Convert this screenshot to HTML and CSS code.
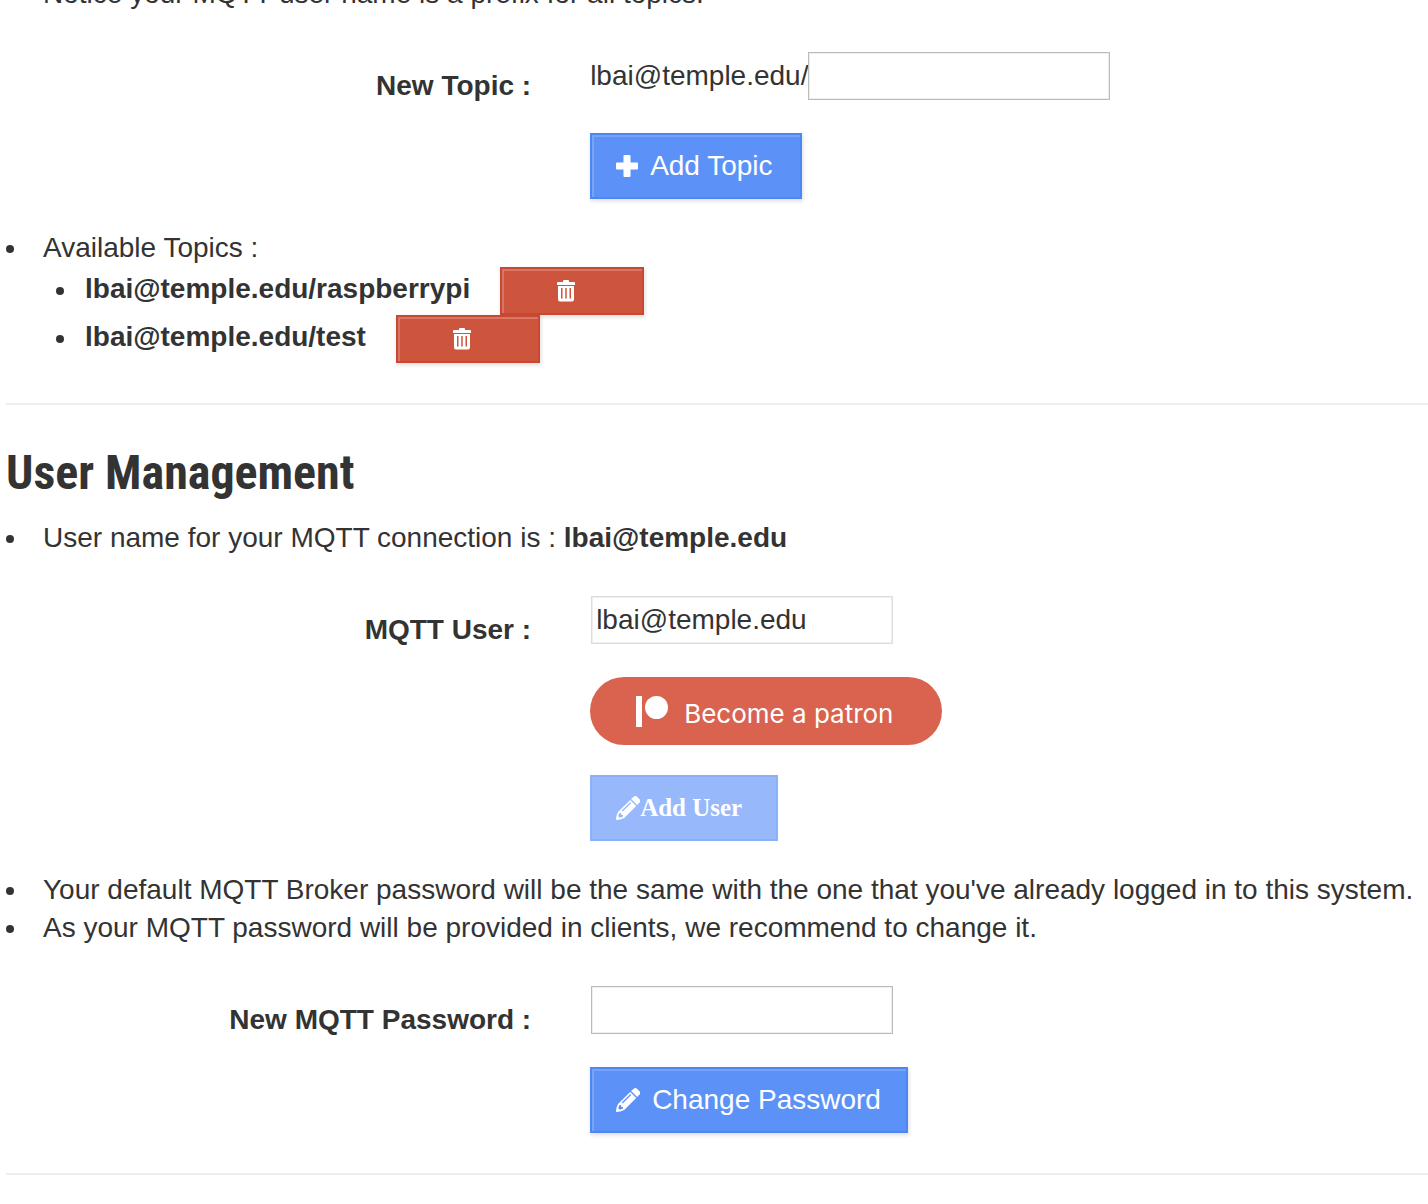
FILE: index.html
```html
<!DOCTYPE html>
<html lang="en">
<head>
<meta charset="utf-8">
<meta name="viewport" content="width=device-width, initial-scale=1">
<title>MQTT Broker</title>
<link rel="stylesheet" href="styles.css">
</head>
<body>
<svg class="sprite" aria-hidden="true">
  <symbol id="pencil" viewBox="0 0 24 24">
    <path fill-rule="evenodd" d="M17.500 1a2.600 2.600 0 0 1 3.700 0L23.300 3.100a2.600 2.600 0 0 1 0 3.700l-2.200 2.200-6-6zM14.200 3.900l6 6L8.200 22Q4.500 24 0 24q0-4.500 2-8zM3.600 17l-1.500 3 1.700 1.800 3.200-1.300v-1.500H5.200V17zM5.800 14.600l.9.9 8.500-8.500-.9-.9z"/>
  </symbol>
  <symbol id="trash" viewBox="0 0 18 22">
    <path fill-rule="evenodd" d="M6 1q0-1 1-1h4q1 0 1 1v1h5q1 0 1 1v2H0V3q0-1 1-1h5zM1 6h16v13.500a2 2 0 0 1-2 2H3a2 2 0 0 1-2-2zM4 8v10.500h1.500V8zM8.250 8v10.500h1.500V8zM12.500 8v10.500H14V8z"/>
  </symbol>
</svg>
<main class="page">
  <section>
    <ul class="list">
      <li><p>Notice your MQTT user name is a prefix for all topics.</p></li>
    </ul>
    <form class="form">
      <label for="topic">New Topic :</label>
      <div class="fields">
        <div class="prefixed"><span>lbai@temple.edu/</span><input class="text" id="topic" type="text"></div>
        <button class="btn btn-add" type="button">
          <svg class="plus" viewBox="0 0 22 22" aria-hidden="true"><path d="M8.500 0h5a1 1 0 0 1 1 1v6.500H21a1 1 0 0 1 1 1v5a1 1 0 0 1-1 1h-6.500V21a1 1 0 0 1-1 1h-5a1 1 0 0 1-1-1v-6.500H1a1 1 0 0 1-1-1v-5a1 1 0 0 1 1-1h6.500V1a1 1 0 0 1 1-1z"/></svg>
          Add Topic
        </button>
      </div>
    </form>
    <ul class="list">
      <li>
        <div>
          <p>Available Topics :</p>
          <ul class="topics">
            <li><strong>lbai@temple.edu/raspberrypi</strong><button class="btn-delete" type="button" aria-label="Delete lbai@temple.edu/raspberrypi"><svg class="trash" aria-hidden="true"><use href="#trash"/></svg></button></li>
            <li><strong>lbai@temple.edu/test</strong><button class="btn-delete" type="button" aria-label="Delete lbai@temple.edu/test"><svg class="trash" aria-hidden="true"><use href="#trash"/></svg></button></li>
          </ul>
        </div>
      </li>
    </ul>
  </section>
  <hr>
  <section>
    <h2>User Management</h2>
    <ul class="list">
      <li><p>User name for your MQTT connection is : <strong>lbai@temple.edu</strong></p></li>
    </ul>
    <form class="form">
      <label for="user">MQTT User :</label>
      <div class="fields">
        <input class="text" id="user" type="text" value="lbai@temple.edu" disabled>
        <a class="patron" href="#">
          <svg viewBox="0 0 32 38" aria-hidden="true"><path d="M0 1h6v31H0z"/><circle cx="20.500" cy="12.500" r="11.500"/></svg>
          Become a patron
        </a>
        <button class="btn btn-user" type="button" disabled><svg class="pencil" aria-hidden="true"><use href="#pencil"/></svg>Add User</button>
      </div>
    </form>
    <ul class="list">
      <li><p>Your default MQTT Broker password will be the same with the one that you've already logged in to this system.</p></li>
      <li><p>As your MQTT password will be provided in clients, we recommend to change it.</p></li>
    </ul>
    <form class="form">
      <label for="password">New MQTT Password :</label>
      <div class="fields">
        <input class="text" id="password" type="password">
        <button class="btn" type="button">
          <svg class="pencil" aria-hidden="true"><use href="#pencil"/></svg>
          Change Password
        </button>
      </div>
    </form>
  </section>
  <hr>
</main>
</body>
</html>
```
FILE: styles.css
```css
* {
  box-sizing: border-box;
}

body {
  margin: 0;
  background: #fff;
  color: #333;
  font: 28px/38px "Liberation Sans", Arial, sans-serif;
  overflow: hidden;
}

.sprite {
  position: absolute;
  width: 0;
  height: 0;
}

/* The page is scrolled part of the way down its first line. */
.page {
  margin-top: -25px;
  padding-left: 6px;
}

p {
  margin: 0;
  white-space: nowrap;
}

hr {
  height: 2px;
  margin: 40px 0;
  border: 0;
  background: #eee;
}

h2 {
  margin: 0 0 18px;
  font: bold 48px/56px "Roboto Condensed", "Arial Narrow", sans-serif;
}

.list,
.topics {
  margin: 0;
  padding: 0;
  list-style: none;
}

.list li {
  display: flex;
  align-items: flex-start;
}

.list li::before {
  content: "";
  flex: none;
  width: 8px;
  height: 8px;
  margin: 16px 29px 0 0;
  border-radius: 50%;
  background: #333;
}

.list .topics li::before {
  margin: 20px 21px 0 13px;
}

.topics strong {
  margin-right: 30px;
  line-height: 44px;
}

.form {
  display: grid;
  grid-template-columns: 37% 1fr;
  column-gap: 58px;
  margin: 39px 0 30px;
}

.form label {
  padding: 15px 1px 0 0;
  font-weight: bold;
  text-align: right;
}

.fields {
  display: flex;
  flex-direction: column;
  align-items: flex-start;
}

.prefixed {
  display: flex;
  align-items: center;
}

.text {
  width: 302px;
  height: 48px;
  padding: 0 4px;
  border: 1px solid #bbb;
  border-radius: 0;
  background: #fff;
  box-shadow: inset 0 0 0 1px #eee;
  color: #333;
  font: inherit;
}

.fields > .text {
  margin-left: 1px;
}

.text:disabled {
  border-color: #ddd;
}

.btn {
  display: flex;
  align-items: center;
  height: 66px;
  margin-top: 33px;
  padding: 0 25px 0 24px;
  border: 2px solid #4d87f5;
  background: #5c92f7;
  box-shadow: inset 2px 2px 0 #77a4f9, 1px 2px 4px rgba(0, 0, 0, 0.14);
  color: #fff;
  font: inherit;
  gap: 12px;
}

.btn-add {
  width: 212px;
}

svg {
  flex: none;
  fill: currentColor;
}

.plus {
  width: 22px;
  height: 22px;
}

.pencil {
  width: 24px;
  height: 24px;
}

.trash {
  width: 18px;
  height: 22px;
}

.btn-user {
  width: 188px;
  margin-top: 30px;
  border-color: #8bb0fa;
  background: #97b8fa;
  box-shadow: none;
  font: bold 25px/38px "Liberation Serif", "Times New Roman", serif;
  gap: 0;
}

.btn-delete {
  display: flex;
  align-items: center;
  width: 144px;
  height: 48px;
  padding: 0 0 0 55px;
  border: 2px solid #cb4830;
  background: #cd553e;
  box-shadow: inset 2px 2px 0 #d97765, 1px 2px 4px rgba(0, 0, 0, 0.14);
  color: #fff;
}

.patron {
  display: flex;
  align-items: center;
  width: 352px;
  height: 68px;
  margin-top: 33px;
  padding: 6px 0 0 46px;
  border-radius: 34px;
  background: #d9634f;
  color: #fff;
  font-family: Inter, Roboto, sans-serif;
  font-size: 26px;
  text-decoration: none;
  white-space: nowrap;
  gap: 16px;
}

.patron svg {
  width: 32px;
  height: 38px;
}
```
